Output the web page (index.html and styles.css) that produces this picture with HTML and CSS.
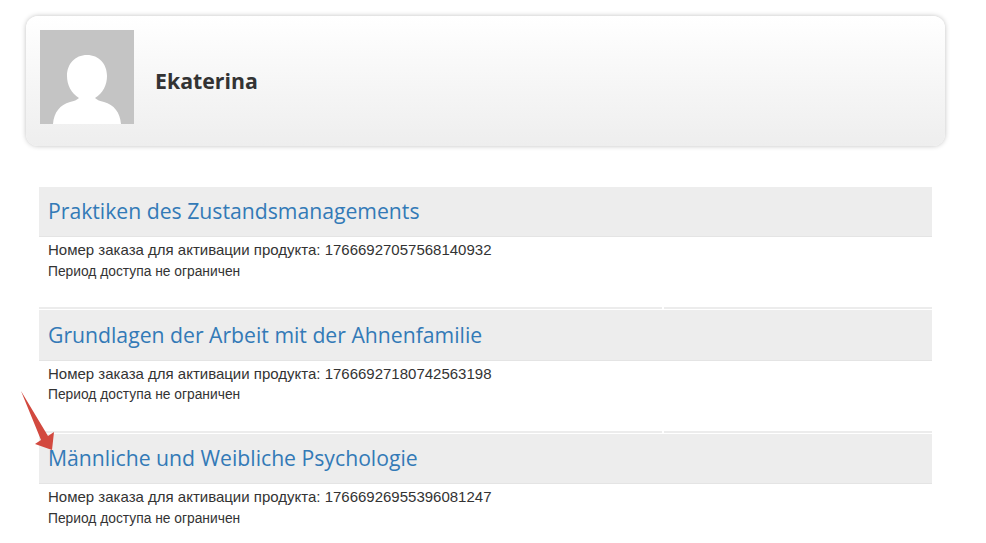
FILE: index.html
```html
<!DOCTYPE html>
<html>
<head>
    <meta charset="UTF-8">
    <title>Ekaterina</title>
    <link rel="stylesheet" href="styles.css">
</head>
<body>
<div class="profile-card">
    <svg class="avatar" width="94" height="94" viewBox="0 0 94 94">
        <rect width="94" height="94" fill="#c4c4c4"/>
        <path d="M13 94 C14 82 20 75 30 72 C34 71 37 70 39 68 C31 63 27 55 27 46 C27 34 35 25 47 25 C59 25 67 34 67 46 C67 55 63 63 55 68 C57 70 60 71 64 72 C74 75 80 82 81 94 Z" fill="#fff"/>
    </svg>
    <div class="profile-name">Ekaterina</div>
</div>

<div class="course-list">
    <div class="course">
        <h2 class="course-title"><a href="#">Praktiken des Zustandsmanagements</a></h2>
        <div class="course-order">Номер заказа для активации продукта: 17666927057568140932</div>
        <div class="course-access">Период доступа не ограничен</div>
        <div class="course-sep"><span class="sep-left"></span><span class="sep-right"></span></div>
    </div>
    <div class="course">
        <h2 class="course-title"><a href="#">Grundlagen der Arbeit mit der Ahnenfamilie</a></h2>
        <div class="course-order">Номер заказа для активации продукта: 17666927180742563198</div>
        <div class="course-access">Период доступа не ограничен</div>
        <div class="course-sep"><span class="sep-left"></span><span class="sep-right"></span></div>
    </div>
    <div class="course">
        <h2 class="course-title"><a href="#">Männliche und Weibliche Psychologie</a></h2>
        <div class="course-order">Номер заказа для активации продукта: 17666926955396081247</div>
        <div class="course-access">Период доступа не ограничен</div>
    </div>
</div>

<svg class="arrow" width="40" height="64" viewBox="0 0 40 64">
    <path d="M1 1 L28 46 L34 42 L32 60 L15 54 L21 50 Z" fill="#d2493f"/>
</svg>
</body>
</html>
```

FILE: styles.css
```css
html, body {
    height: 543px;
    overflow: hidden;
}
body {
    margin: 0;
    background-color: white;
    font-family: "Liberation Sans", Arial, sans-serif;
    color: #333;
    position: relative;
}
.profile-card {
    display: flex;
    align-items: center;
    box-sizing: border-box;
    width: 919px;
    height: 130px;
    margin: 16px 0 0 26px;
    padding: 0 0 8px 14px;
    border-radius: 12px;
    background: linear-gradient(to bottom, #ffffff, #eeeeee);
    box-shadow: 0 0 5px rgba(0,0,0,0.25);
}
.avatar {
    display: block;
}
.profile-name {
    margin: 6px 0 0 21px;
    font-family: "Open Sans", sans-serif;
    font-size: 21.3px;
    font-weight: bold;
    color: #333;
}
.course-list {
    width: 893px;
    margin: 41px 0 0 39px;
}
.course {
    height: 123px;
}
.course-title {
    box-sizing: border-box;
    height: 50px;
    margin: 0 0 5px 0;
    padding-left: 9px;
    background-color: #ededed;
    border-bottom: 1px solid #e4e4e4;
    font-family: "Open Sans", sans-serif;
    font-size: 21.2px;
    font-weight: normal;
    line-height: 47px;
}
.course-title a {
    color: #337ab7;
    text-decoration: none;
}
.course-order {
    padding-left: 9px;
    font-size: 15px;
    line-height: 16px;
}
.course-access {
    margin-top: 6px;
    padding-left: 9px;
    font-size: 13.8px;
    line-height: 16px;
}
.course-sep {
    display: flex;
    gap: 2px;
    margin-top: 27px;
}
.course:nth-child(2) {
    height: 124px;
}
.course:nth-child(2) .course-title {
    height: 51px;
    line-height: 49px;
}
.course:nth-child(2) .course-access {
    margin-top: 5px;
}
.course:nth-child(2) .course-sep {
    margin-top: 28px;
}
.sep-left, .sep-right {
    height: 2px;
    background-color: #ececec;
}
.sep-left {
    width: 623px;
}
.sep-right {
    flex: 1;
}
.arrow {
    position: absolute;
    left: 20px;
    top: 390px;
}
```
